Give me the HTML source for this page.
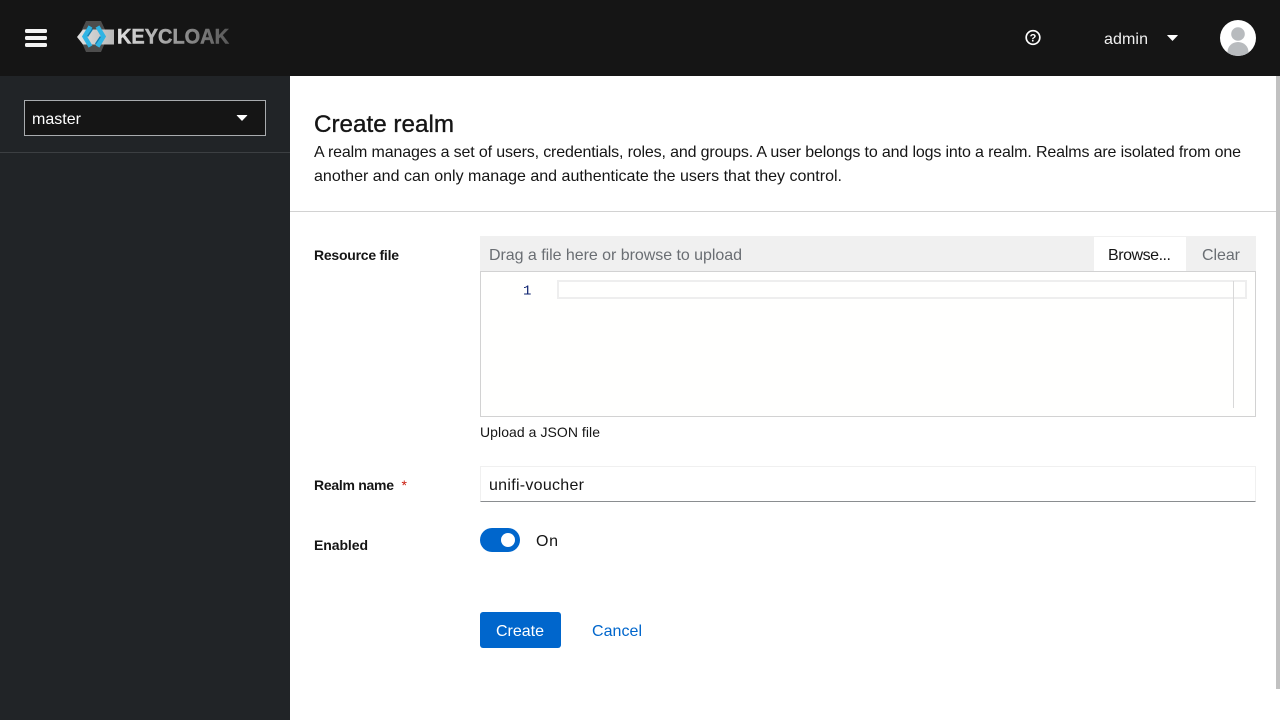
<!DOCTYPE html>
<html lang="en">
<head>
<meta charset="utf-8">
<title>Create realm</title>
<style>
html,body{margin:0;padding:0;width:1280px;height:720px;overflow:hidden;background:#fff}
div{position:absolute;box-sizing:border-box}
svg{position:absolute;left:0;top:0}
text{font-family:"Liberation Sans",sans-serif;font-size:16px;fill:#151515}
</style>
</head>
<body>
<div style="left:0;top:0;width:1280px;height:76px;background:#151515"></div>
<div style="left:0;top:76px;width:290px;height:644px;background:#212427"></div>
<div style="left:0;top:152px;width:290px;height:1px;background:#3c3f42"></div>
<div style="left:24px;top:100px;width:242px;height:36px;background:#151515;border:1px solid #a8abae"></div>
<div style="left:290px;top:211px;width:990px;height:1px;background:#d2d2d2"></div>
<div style="left:1276px;top:76px;width:4px;height:613px;background:#c1c1c1"></div>
<div style="left:480px;top:236px;width:776px;height:35px;background:#f0f0f0"></div>
<div style="left:1094px;top:237px;width:92px;height:34px;background:#fff"></div>
<div style="left:480px;top:271px;width:776px;height:146px;background:#fffffe;border:1px solid #d2d2d2"></div>
<div style="left:557px;top:280px;width:690px;height:19px;border:2px solid #eeeeee"></div>
<div style="left:1233px;top:281px;width:1px;height:127px;background:#d8d8d8"></div>
<div style="left:480px;top:466px;width:776px;height:36px;background:#fff;border:1px solid #f0f0f0;border-bottom:1px solid #8a8d90"></div>
<div style="left:480px;top:528px;width:40px;height:24px;border-radius:12px;background:#0066cc"></div>
<div style="left:501px;top:533px;width:14px;height:14px;border-radius:50%;background:#fff"></div>
<div style="left:480px;top:612px;width:80.5px;height:36px;border-radius:3px;background:#0066cc"></div>
<svg width="1280" height="720" viewBox="0 0 1280 720" xmlns="http://www.w3.org/2000/svg">
  <defs>
    <linearGradient id="kc" gradientUnits="userSpaceOnUse" x1="117" y1="0" x2="229" y2="0">
      <stop offset="0" stop-color="#e0e0e0"/>
      <stop offset="1" stop-color="#585858"/>
    </linearGradient>
    <linearGradient id="band" gradientUnits="userSpaceOnUse" x1="77" y1="0" x2="114" y2="0">
      <stop offset="0" stop-color="#e2e2e2"/>
      <stop offset="1" stop-color="#b8b8b8"/>
    </linearGradient>
    <clipPath id="av"><circle cx="1238" cy="38" r="18"/></clipPath>
  </defs>

  <!-- hamburger -->
  <rect x="25" y="29" width="22" height="4" rx="1.5" fill="#f3f3f3"/>
  <rect x="25" y="36" width="22" height="4" rx="1.5" fill="#f3f3f3"/>
  <rect x="25" y="43" width="22" height="4" rx="1.5" fill="#f3f3f3"/>

  <!-- logo -->
  <polygon points="86,21 101,21 108,36 101,52 86,52 79,36" fill="#4d4d4d"/>
  <polygon points="77,37 83,29.5 114,29.5 114,44.5 83,44.5" fill="url(#band)"/>
  <path d="M90.5,26.5 L84.5,36.5 L90.5,46.5" fill="none" stroke="#2fb4e4" stroke-width="4.4" stroke-linejoin="miter"/>
  <path d="M97.5,26.5 L103.5,36.5 L97.5,46.5" fill="none" stroke="#2fb4e4" stroke-width="4.4" stroke-linejoin="miter"/>
  <path d="M92.5,29 L87.5,36.5" fill="none" stroke="#0f7fb4" stroke-width="1.4"/>
  <path d="M95.5,44 L100.5,36.5" fill="none" stroke="#0f7fb4" stroke-width="1.4"/>
  <text x="117" y="43.7" textLength="112" lengthAdjust="spacingAndGlyphs" style="font-size:21px;font-weight:bold;fill:url(#kc);stroke:url(#kc);stroke-width:.5px">KEYCLOAK</text>

  <text x="32" y="124" textLength="49" style="fill:#fff">master</text>
  <polygon points="237,115.3 247,115.3 242,120.5" fill="#fff" stroke="#fff" stroke-width=".6" stroke-linejoin="round"/>

  <!-- help -->
  <circle cx="1033" cy="37.5" r="6.8" fill="none" stroke="#fff" stroke-width="1.7"/>
  <text x="1033" y="41.5" text-anchor="middle" style="font-size:11px;font-weight:bold;fill:#fff">?</text>

  <text x="1104" y="44" textLength="44" style="fill:#f0f0f0">admin</text>
  <polygon points="1167.5,35.3 1177.5,35.3 1172.5,40.5" fill="#fff" stroke="#fff" stroke-width=".6" stroke-linejoin="round"/>

  <!-- avatar -->
  <circle cx="1238" cy="38" r="18" fill="#fff"/>
  <g clip-path="url(#av)">
    <circle cx="1238" cy="34" r="6.8" fill="#b8bbbe"/>
    <ellipse cx="1238" cy="52" rx="10.5" ry="10" fill="#b8bbbe"/>
  </g>

  <!-- heading -->
  <text x="314" y="132" textLength="140" lengthAdjust="spacingAndGlyphs" style="font-size:24px;stroke:#151515;stroke-width:.35px">Create realm</text>
  <text x="314" y="157" textLength="927">A realm manages a set of users, credentials, roles, and groups. A user belongs to and logs into a realm. Realms are isolated from one</text>
  <text x="314" y="181" textLength="528">another and can only manage and authenticate the users that they control.</text>

  <!-- labels -->
  <text x="314" y="260" textLength="85" style="font-size:14px;font-weight:bold">Resource file</text>
  <text x="314" y="490" textLength="80" style="font-size:14px;font-weight:bold">Realm name</text>
  <text x="401.5" y="490" style="font-size:14px;fill:#c9190b">*</text>
  <text x="314" y="550" textLength="54" style="font-size:14px;font-weight:bold">Enabled</text>

  <!-- file upload -->
  <text x="489" y="260" textLength="253" style="fill:#6a6e73">Drag a file here or browse to upload</text>
  <text x="1108" y="260" textLength="63">Browse...</text>
  <text x="1202" y="260" textLength="38" style="fill:#6a6e73">Clear</text>
  <text x="523" y="294.5" style="font-family:'Liberation Mono',monospace;font-size:14px;fill:#0b216f">1</text>
  <text x="480" y="437" textLength="120" style="font-size:14px">Upload a JSON file</text>

  <text x="489" y="490" textLength="95">unifi-voucher</text>
  <text x="536" y="546" textLength="22">On</text>
  <text x="496" y="636" textLength="48" style="fill:#fff">Create</text>
  <text x="592" y="636" textLength="50" style="fill:#0066cc">Cancel</text>
</svg>
</body>
</html>
